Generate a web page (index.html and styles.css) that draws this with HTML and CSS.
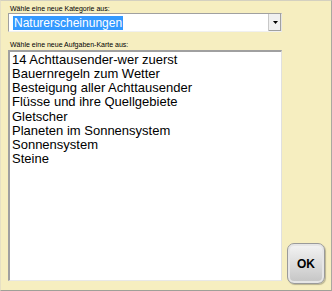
FILE: index.html
```html
<!DOCTYPE html>
<html>
<head>
<meta charset="utf-8">
<link rel="stylesheet" href="styles.css">
</head>
<body>
<div class="win">
  <div class="main">
    <div class="lbl">Wähle eine neue Kategorie aus:</div>
    <div class="combo">
      <div class="combo-field"><span class="sel">Naturerscheinungen</span></div>
      <div class="drop"><svg width="5" height="3" viewBox="0 0 5 3"><path d="M0 0H5L2.5 3Z" fill="#000"/></svg></div>
    </div>
    <div class="lbl lbl2">Wähle eine neue Aufgaben-Karte aus:</div>
    <ul class="list">
      <li>14 Achttausender-wer zuerst</li>
      <li>Bauernregeln zum Wetter</li>
      <li>Besteigung aller Achttausender</li>
      <li>Flüsse und ihre Quellgebiete</li>
      <li>Gletscher</li>
      <li>Planeten im Sonnensystem</li>
      <li>Sonnensystem</li>
      <li>Steine</li>
    </ul>
  </div>
  <div class="side">
    <button class="ok">OK</button>
  </div>
</div>
</body>
</html>
```

FILE: styles.css
```css
html, body {
  margin: 0;
  padding: 0;
}
body {
  font-family: "Liberation Sans", Arial, sans-serif;
  background: #f6eec0;
}
.win {
  width: 332px;
  height: 291px;
  box-sizing: border-box;
  background: #f6eec0;
  border-top: 1px solid #d4d0c0;
  border-left: 1px solid #e6e0c4;
  border-right: 1px solid #a8a8a0;
  border-bottom: 1px solid #a0a098;
  display: flex;
}
.main {
  width: 274px;
  padding-left: 7px;
  padding-top: 3px;
  display: flex;
  flex-direction: column;
}
.lbl {
  font-size: 7px;
  line-height: 9px;
  color: #000;
  padding-left: 2px;
  white-space: nowrap;
}
.lbl2 {
  margin-top: 8px;
  margin-bottom: 1px;
}
.combo {
  height: 19px;
  box-sizing: border-box;
  border-top: 1px solid #a0a0a0;
  border-left: 1px solid #a0a0a0;
  border-right: 1px solid #e4e4e4;
  border-bottom: 1px solid #f0f0f0;
  background: #fff;
  display: flex;
}
.combo-field {
  flex: 1;
  display: flex;
  align-items: center;
  padding-left: 4px;
}
.sel {
  background: #3399ff;
  color: #fff;
  font-size: 12px;
  line-height: 14px;
  padding: 0 1px;
}
.drop {
  width: 12px;
  background: #f0f0f0;
  border-left: 1px solid #c8c8c8;
  display: flex;
  align-items: center;
  justify-content: center;
  box-shadow: inset -1px -1px 0 #a0a0a0;
}
.list {
  list-style: none;
  margin: 0;
  height: 231px;
  box-sizing: border-box;
  background: #fff;
  border-top: 2px solid #a0a0a0;
  border-left: 2px solid #a0a0a0;
  border-right: 1px solid #e0e0e0;
  border-bottom: 1px solid #e8e8e8;
  padding: 1px 0 0 2px;
  font-size: 13px;
  line-height: 14.15px;
  color: #000;
}
.side {
  flex: 1;
  display: flex;
  align-items: flex-end;
  justify-content: flex-end;
  padding: 0 6px 6px 0;
}
.ok {
  width: 38px;
  height: 41px;
  border: 1px solid #9a9a9a;
  border-radius: 7px;
  background: linear-gradient(#f4f4f4, #d8d8d8 60%, #c4c4c4);
  box-shadow: inset 0 0 0 2px #e6e6e6, 1px 1px 1px rgba(0,0,0,0.25);
  font-family: "Liberation Sans", Arial, sans-serif;
  font-weight: bold;
  font-size: 12px;
  color: #000;
  padding: 0;
}
```
